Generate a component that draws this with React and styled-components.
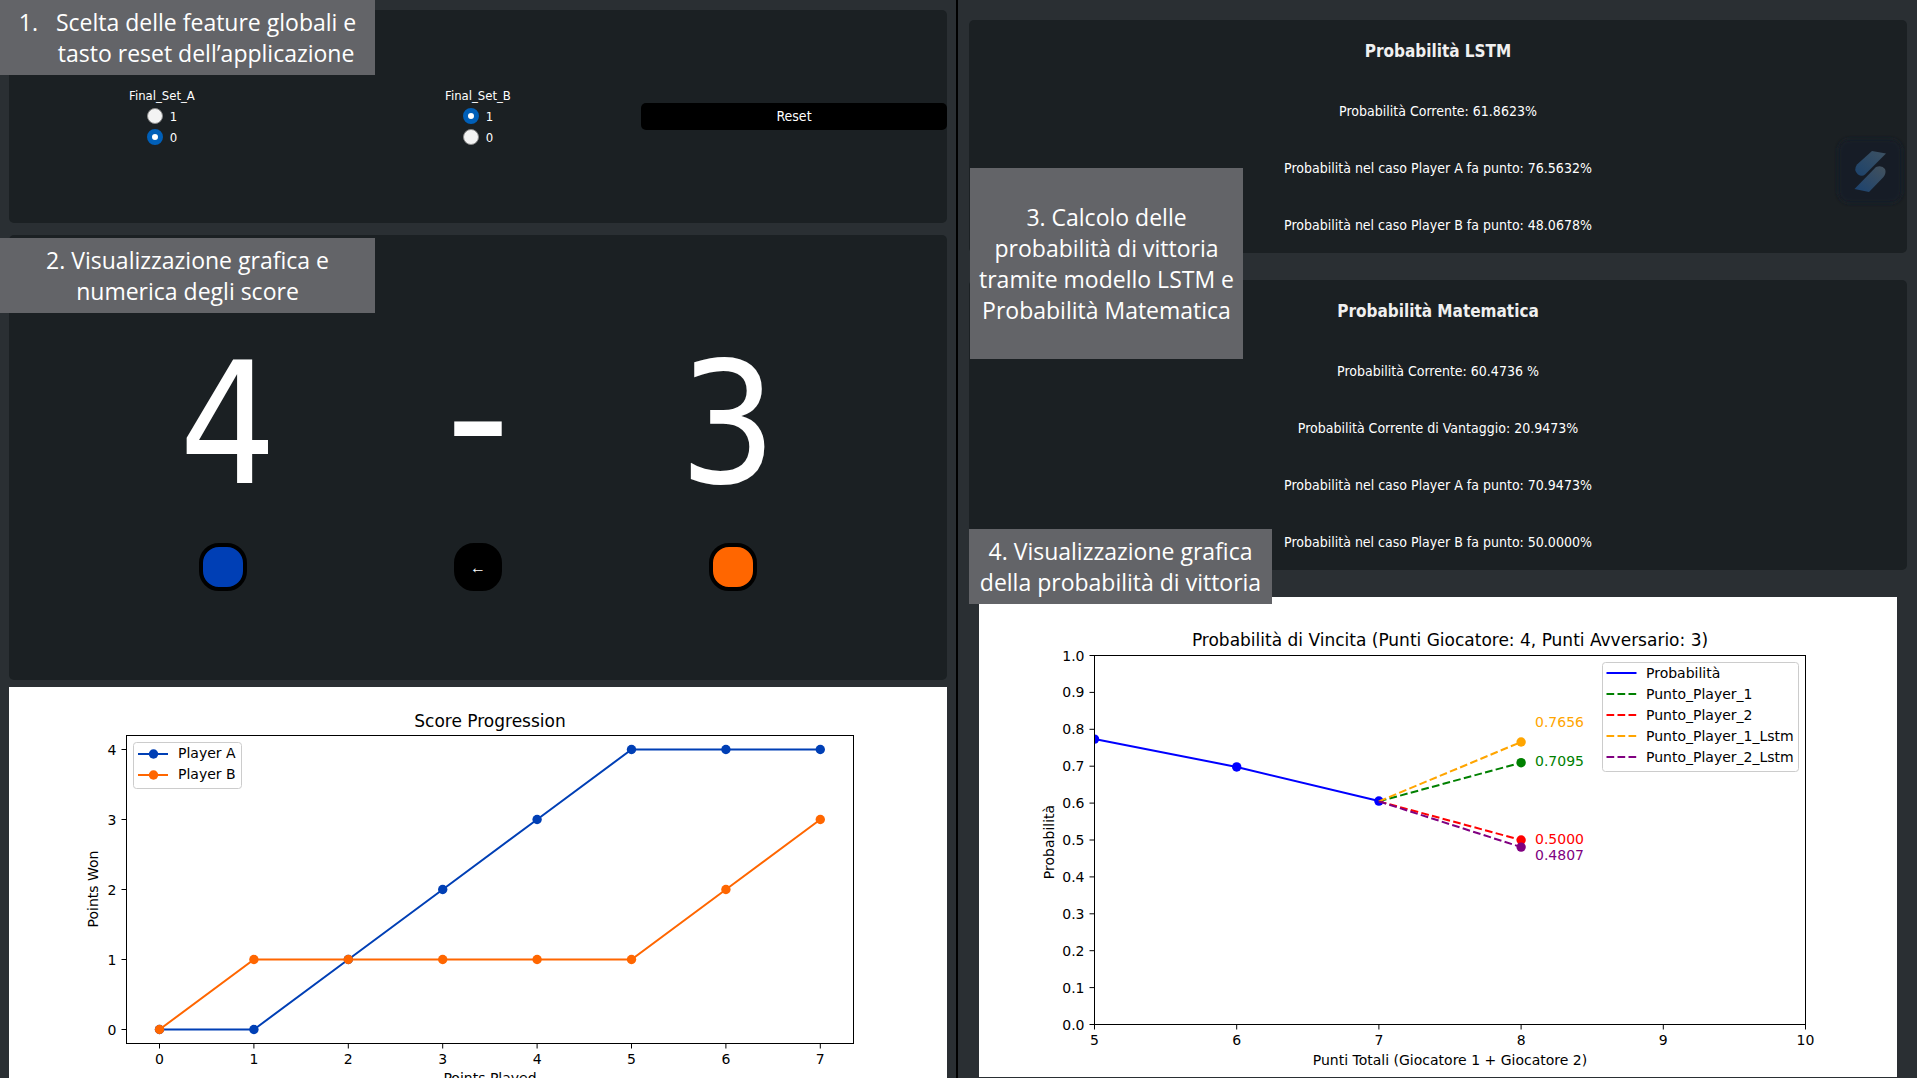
import React, { useState } from "react";
import styled, { createGlobalStyle } from "styled-components";

const uiFont = '"DejaVu Sans Condensed", "DejaVu Sans", sans-serif';
const noteFont = '"Open Sans", "Noto Sans", sans-serif';

const GlobalStyle = createGlobalStyle`
  * { box-sizing: border-box; }
  body {
    margin: 0;
    overflow: hidden;
    background: #2a2f33;
    color: #fff;
    font: 14px/17px ${uiFont};
  }
`;

const Page = styled.main`
  display: grid;
  grid-template-columns: 956fr 2px 959fr;
  height: 100vh;
  overflow: hidden;
`;

const Divider = styled.div`
  background: #000;
`;

const LeftPane = styled.section`
  position: relative;
  padding: 10px 9px 0;
`;

const RightPane = styled.section`
  position: relative;
  display: flex;
  flex-direction: column;
  gap: 27px;
  padding: 20px 10px 0 11px;
`;

const Card = styled.div`
  background: #1b2023;
  border-radius: 5px;
`;

const FeatureCard = styled(Card)`
  display: grid;
  grid-template-columns: repeat(3, 1fr);
  align-items: center;
  gap: 10px;
  min-height: 213px;
`;

const RadioSet = styled.fieldset`
  display: flex;
  flex-direction: column;
  align-items: center;
  margin: 0;
  padding: 0;
  border: 0;
  font-size: 13px;
`;

const RadioTitle = styled.legend`
  margin: 0 auto;
  padding: 0;
  line-height: 20px;
`;

const RadioLabel = styled.label`
  display: flex;
  align-items: center;
  gap: 7px;
  height: 21px;
`;

const Radio = styled.input`
  appearance: none;
  width: 16px;
  height: 16px;
  margin: 0;
  border: 1px solid #8a8a8a;
  border-radius: 50%;
  background: #f3f3f3;

  &:checked {
    border: 5px solid #005fb8;
    background: #fff;
  }
`;

const ResetButton = styled.button`
  height: 27px;
  padding: 0;
  border: 0;
  border-radius: 5px;
  background: #000;
  color: #fff;
  font: 14px/17px ${uiFont};
`;

const ScoreCard = styled(Card)`
  display: flex;
  flex-direction: column;
  justify-content: center;
  align-items: center;
  gap: 19px;
  min-height: 445px;
  margin: 12px 0 7px;
`;

const ScoreRow = styled.div`
  display: grid;
  grid-template-columns: repeat(3, 1fr);
  justify-items: center;
  width: 100%;
  padding: 0 94px;
`;

const Score = styled.output`
  font-size: 170px;
  line-height: 200px;
`;

const Dash = styled.span`
  font: 180px/184px "DejaVu Sans", sans-serif;
`;

const ButtonRow = styled(ScoreRow)`
  padding: 0 87px;
`;

const RoundButton = styled.button`
  width: 48px;
  height: 48px;
  padding: 0;
  border: 4px solid #000;
  border-radius: 20px;
  background: ${(p) => p.$fill};
  color: #fff;
  font: 16px/17px "Liberation Sans", sans-serif;
`;

const ProbabilityCard = styled(Card)`
  display: flex;
  flex-direction: column;
  align-items: center;
  gap: 40px;
  padding: 20px 0 19px;
`;

const CardTitle = styled.h2`
  margin: 0;
  color: #f0f0f0;
  font-size: 17px;
  line-height: 23px;
`;

const Line = styled.p`
  margin: 0;
`;

const Plot = styled.svg`
  display: block;
  width: 100%;
  height: auto;
  background: #fff;
  fill: #000;
  font: 14px "DejaVu Sans", sans-serif;
`;

const PlotHolder = styled.div`
  margin: 0 10px;
`;

const PlotTitle = styled.text`
  font-size: 17px;
`;

const Note = styled.aside`
  position: absolute;
  display: flex;
  align-items: center;
  justify-content: center;
  top: ${(p) => p.$top}px;
  left: ${(p) => p.$left}px;
  width: ${(p) => p.$width}px;
  height: ${(p) => p.$height}px;
  background: #636468;
  font: 23px/31px ${noteFont};
  text-align: center;
`;

const NoteNumber = styled.span`
  align-self: flex-start;
  padding: 7px 18px 0 0;
`;

const Watermark = styled.svg`
  position: absolute;
  top: 135px;
  right: 11px;
  width: 72px;
  height: 72px;
`;

function RadioGroup({ name, initial }) {
  const [value, setValue] = useState(initial);
  return (
    <RadioSet>
      <RadioTitle>{name}</RadioTitle>
      {["1", "0"].map((v) => (
        <RadioLabel key={v}>
          <Radio type="radio" name={name} value={v} checked={value === v} onChange={() => setValue(v)} />
          {v}
        </RadioLabel>
      ))}
    </RadioSet>
  );
}

function Axes({ box, xTicks, yTicks }) {
  const [left, top, right, bottom] = box;
  return (
    <g>
      <rect x={left} y={top} width={right - left} height={bottom - top} fill="none" stroke="#000" />
      {xTicks.map(([x, label]) => (
        <g key={label}>
          <path d={`M${x} ${bottom}v5`} stroke="#000" />
          <text x={x} y={bottom + 20} textAnchor="middle">{label}</text>
        </g>
      ))}
      {yTicks.map(([y, label]) => (
        <g key={label}>
          <path d={`M${left} ${y}h-5`} stroke="#000" />
          <text x={left - 10} y={y + 5} textAnchor="end">{label}</text>
        </g>
      ))}
    </g>
  );
}

function ScorePlot() {
  const x = (v) => 150.5 + v * 94.4;
  const y = (v) => 342.5 - v * 70;
  const series = [
    { name: "Player A", color: "#003fb5", data: [0, 0, 1, 2, 3, 4, 4, 4] },
    { name: "Player B", color: "#ff6600", data: [0, 1, 1, 1, 1, 1, 2, 3] },
  ];
  return (
    <Plot viewBox="0 0 938 440" role="img" aria-label="Score Progression">
      <PlotTitle x="481" y="40" textAnchor="middle">Score Progression</PlotTitle>
      {series.map((s) => (
        <g key={s.name} fill={s.color}>
          <polyline points={s.data.map((v, i) => `${x(i)},${y(v)}`).join(" ")} fill="none" stroke={s.color} strokeWidth="2" />
          {s.data.map((v, i) => <circle key={i} cx={x(i)} cy={y(v)} r="4.7" />)}
        </g>
      ))}
      <Axes
        box={[117.5, 48.5, 844.5, 356.5]}
        xTicks={[0, 1, 2, 3, 4, 5, 6, 7].map((v) => [x(v), v])}
        yTicks={[0, 1, 2, 3, 4].map((v) => [y(v), v])}
      />
      <text x="481" y="396" textAnchor="middle">Points Played</text>
      <text transform="translate(89 202) rotate(-90)" textAnchor="middle">Points Won</text>
      <rect x="124.5" y="55.5" width="108" height="46" rx="3" fill="#fff" stroke="#ccc" />
      {series.map((s, i) => (
        <g key={s.name}>
          <path d={`M129 ${67 + i * 21}h30`} stroke={s.color} strokeWidth="2" />
          <circle cx="144.5" cy={67 + i * 21} r="4.7" fill={s.color} />
          <text x="169" y={71 + i * 21}>{s.name}</text>
        </g>
      ))}
    </Plot>
  );
}

function ProbabilityPlot() {
  const x = (v) => 115.5 + (v - 5) * 142.2;
  const y = (v) => 427.5 - v * 369;
  const past = [[5, 0.7735], [6, 0.698], [7, 0.6055]];
  const branches = [
    { name: "Punto_Player_1", color: "#008000", value: 0.7095, labelY: 169 },
    { name: "Punto_Player_2", color: "#ff0000", value: 0.5, labelY: 247 },
    { name: "Punto_Player_1_Lstm", color: "#ffa500", value: 0.7656, labelY: 130 },
    { name: "Punto_Player_2_Lstm", color: "#800080", value: 0.4807, labelY: 263 },
  ];
  const legend = [{ name: "Probabilità", color: "#0000ff" }, ...branches];
  return (
    <Plot viewBox="0 0 918 480" role="img" aria-label="Probabilità di Vincita">
      <defs>
        <clipPath id="plot-area">
          <rect x="115" y="58" width="712" height="370" />
        </clipPath>
      </defs>
      <PlotTitle x="471" y="49" textAnchor="middle">
        Probabilità di Vincita (Punti Giocatore: 4, Punti Avversario: 3)
      </PlotTitle>
      <g clipPath="url(#plot-area)" fill="#0000ff">
        <polyline points={past.map(([a, b]) => `${x(a)},${y(b)}`).join(" ")} fill="none" stroke="#0000ff" strokeWidth="2" />
        {past.map(([a, b]) => <circle key={a} cx={x(a)} cy={y(b)} r="4.7" />)}
      </g>
      {branches.map((b) => (
        <g key={b.name} fill={b.color}>
          <path d={`M${x(7)} ${y(0.6047)}L${x(8)} ${y(b.value)}`} stroke={b.color} strokeWidth="2" strokeDasharray="7.7 3.3" />
          <circle cx={x(8)} cy={y(b.value)} r="4.7" />
          <text x="556" y={b.labelY}>{b.value.toFixed(4)}</text>
        </g>
      ))}
      <Axes
        box={[115.5, 58.5, 826.5, 427.5]}
        xTicks={[5, 6, 7, 8, 9, 10].map((v) => [x(v), v])}
        yTicks={Array.from({ length: 11 }, (_, i) => [y(i / 10), (i / 10).toFixed(1)])}
      />
      <text x="471" y="468" textAnchor="middle">Punti Totali (Giocatore 1 + Giocatore 2)</text>
      <text transform="translate(75 245) rotate(-90)" textAnchor="middle">Probabilità</text>
      <rect x="623.5" y="65.5" width="196" height="109" rx="3" fill="#fff" stroke="#ccc" />
      {legend.map((s, i) => (
        <g key={s.name}>
          <path d={`M627.5 ${76 + i * 21}h30`} stroke={s.color} strokeWidth="2" strokeDasharray={i ? "7.7 3.3" : undefined} />
          <text x="667" y={81 + i * 21}>{s.name}</text>
        </g>
      ))}
    </Plot>
  );
}

function Probabilities({ title, lines }) {
  return (
    <ProbabilityCard>
      <CardTitle>{title}</CardTitle>
      {lines.map((line) => <Line key={line}>{line}</Line>)}
    </ProbabilityCard>
  );
}

export default function App() {
  return (
    <Page>
      <GlobalStyle />
      <LeftPane>
        <FeatureCard>
          <RadioGroup name="Final_Set_A" initial="0" />
          <RadioGroup name="Final_Set_B" initial="1" />
          <ResetButton type="button">Reset</ResetButton>
        </FeatureCard>
        <ScoreCard>
          <ScoreRow>
            <Score>4</Score>
            <Dash>-</Dash>
            <Score>3</Score>
          </ScoreRow>
          <ButtonRow>
            <RoundButton type="button" $fill="#003fb5" aria-label="Player A" />
            <RoundButton type="button" $fill="#000">←</RoundButton>
            <RoundButton type="button" $fill="#ff6600" aria-label="Player B" />
          </ButtonRow>
        </ScoreCard>
        <ScorePlot />
        <Note $top={0} $left={0} $width={375} $height={75}>
          <NoteNumber>1.</NoteNumber>
          <span>Scelta delle feature globali e<br />tasto reset dell’applicazione</span>
        </Note>
        <Note $top={238} $left={0} $width={375} $height={75}>
          <span>2. Visualizzazione grafica e<br />numerica degli score</span>
        </Note>
      </LeftPane>
      <Divider />
      <RightPane>
        <Probabilities
          title="Probabilità LSTM"
          lines={[
            "Probabilità Corrente: 61.8623%",
            "Probabilità nel caso Player A fa punto: 76.5632%",
            "Probabilità nel caso Player B fa punto: 48.0678%",
          ]}
        />
        <Probabilities
          title="Probabilità Matematica"
          lines={[
            "Probabilità Corrente: 60.4736 %",
            "Probabilità Corrente di Vantaggio: 20.9473%",
            "Probabilità nel caso Player A fa punto: 70.9473%",
            "Probabilità nel caso Player B fa punto: 50.0000%",
          ]}
        />
        <PlotHolder>
          <ProbabilityPlot />
        </PlotHolder>
        <Watermark viewBox="0 0 72 72" aria-hidden="true">
          <defs>
            <linearGradient id="mark-top" x1="0" y1="1" x2="1" y2="0">
              <stop offset="0" stopColor="#1c426b" />
              <stop offset="1" stopColor="#3e5262" />
            </linearGradient>
            <linearGradient id="mark-bottom" x1="0" y1="1" x2="1" y2="0">
              <stop offset="0" stopColor="#1a4270" />
              <stop offset="1" stopColor="#44525d" />
            </linearGradient>
            <filter id="mark-soft">
              <feGaussianBlur stdDeviation="2" />
            </filter>
          </defs>
          <rect x="4" y="4" width="64" height="64" rx="12" fill="#161c26" filter="url(#mark-soft)" />
          <path d="M38 16L52 18.500L31 39.500Q28 42 24 39.500Q19 35 23 29.500Z" fill="url(#mark-top)" />
          <path d="M20.500 54L35 57L49.500 42Q52.500 38 51 34Q48 30 42 32Z" fill="url(#mark-bottom)" />
        </Watermark>
        <Note $top={168} $left={12} $width={273} $height={191}>
          <span>3. Calcolo delle<br />probabilità di vittoria<br />tramite modello LSTM e<br />Probabilità Matematica</span>
        </Note>
        <Note $top={529} $left={11} $width={303} $height={75}>
          <span>4. Visualizzazione grafica<br />della probabilità di vittoria</span>
        </Note>
      </RightPane>
    </Page>
  );
}
